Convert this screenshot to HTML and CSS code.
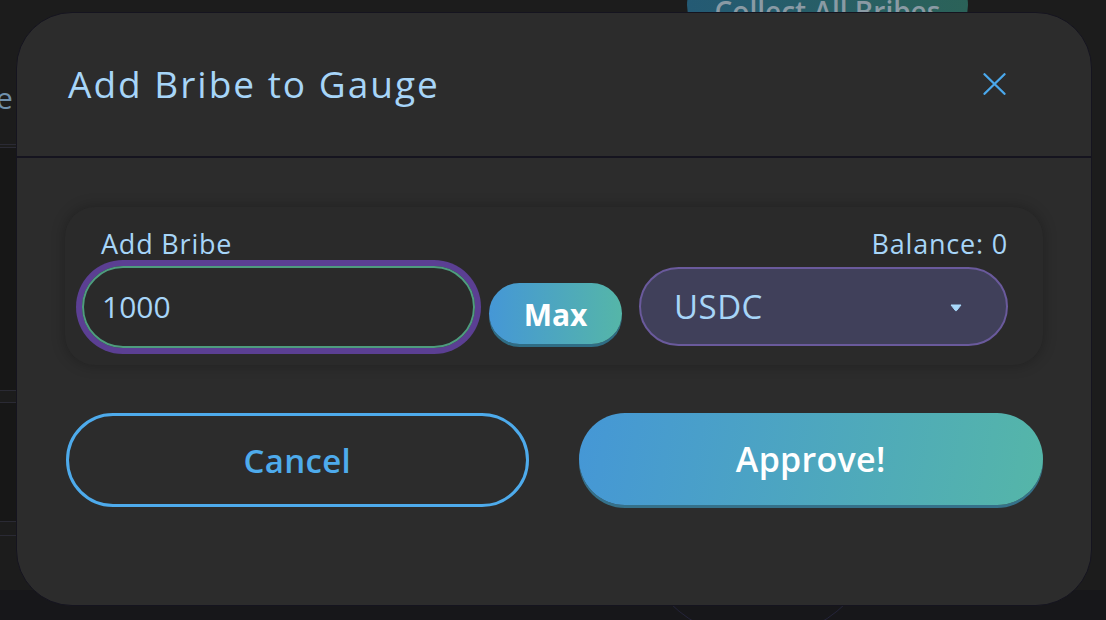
FILE: index.html
```html
<!DOCTYPE html>
<html lang="en">
<head>
<meta charset="utf-8">
<title>Add Bribe to Gauge</title>
<link rel="stylesheet" href="styles.css">
</head>
<body>
<div class="page">
  <div class="bg-pill">Collect All Bribes</div>
  <div class="bg-left">
    <div class="seg s1"><span class="bg-word">e</span></div>
    <div class="seg s2"></div>
    <div class="seg s3"></div>
    <div class="seg s4"></div>
    <div class="seg s5"></div>
    <div class="seg s6"></div>
  </div>
  <div class="bg-bottom">
    <div class="bg-circle"></div>
  </div>
</div>

<div class="overlay">
  <div class="modal">
    <div class="modal-header">
      <h2 class="modal-title">Add Bribe to Gauge</h2>
      <button class="close-btn" aria-label="Close">
        <svg width="23" height="22" viewBox="0 0 23 22"><path d="M1.5 1.2 L21.5 20.8 M21.5 1.2 L1.5 20.8" stroke="#4aa8ec" stroke-width="2.3" stroke-linecap="round" fill="none"/></svg>
      </button>
    </div>
    <div class="modal-body">
      <div class="card">
        <div class="label-row">
          <span class="label">Add Bribe</span>
          <span class="label">Balance: 0</span>
        </div>
        <div class="control-row">
          <div class="amount-input">1000</div>
          <button class="max-btn">Max</button>
          <div class="token-select">
            <span>USDC</span>
            <svg class="caret" width="12" height="8" viewBox="0 0 12 8"><path d="M1 1 H11 L6.6 6.6 Q6 7.3 5.4 6.6 Z" fill="#a8d8fa" stroke="#a8d8fa" stroke-width="1" stroke-linejoin="round"/></svg>
          </div>
        </div>
      </div>
      <div class="actions">
        <button class="btn-cancel">Cancel</button>
        <button class="btn-approve">Approve!</button>
      </div>
    </div>
  </div>
</div>
</body>
</html>
```

FILE: styles.css
```css
* { box-sizing: border-box; }
html, body { margin: 0; padding: 0; }
body {
  width: 1106px;
  height: 620px;
  overflow: hidden;
  background: #1c1c1c;
  font-family: "Open Sans", "Liberation Sans", sans-serif;
  position: relative;
}

/* background page (dimmed behind overlay) */
.page { position: absolute; inset: 0; }
.bg-pill {
  position: absolute;
  left: 687px; top: -30px;
  width: 281px; height: 70px;
  border-radius: 35px;
  background: linear-gradient(90deg, #245a74, #2b6258);
  color: #8a9aa4;
  font-size: 28px;
  font-weight: 600;
  display: flex; align-items: flex-end; justify-content: center;
  padding-bottom: 10px;
}
.bg-left { position: absolute; left: 0; top: 0; width: 17px; height: 620px; display: flex; flex-direction: column; }
.seg { border-bottom: 1px solid #2a2a34; background: #171717; flex: none; }
.s1 { height: 145px; background: #1c1c1c; position: relative; }
.s2 { height: 3px; background: #1c1c1c; }
.s3 { height: 243px; }
.s4 { height: 12px; background: #1c1c1c; }
.s5 { height: 119px; }
.s6 { height: 14px; background: #1c1c1c; }
.bg-word { position: absolute; left: -4px; top: 80px; font-size: 30px; line-height: 36px; color: #6f90ad; }
.bg-bottom { position: absolute; left: 0; right: 0; bottom: 0; height: 30px; background: #17171a; }
.bg-circle { position: absolute; left: 633px; top: -200px; width: 250px; height: 250px; border-radius: 50%; border: 1px solid #24243a; }

/* overlay */
.overlay {
  position: absolute; inset: 0;
  padding: 12px 0 0 16px;
}
.modal {
  width: 1076px;
  height: 594px;
  background: #2c2c2c;
  border: 1px solid #15141f;
  border-radius: 56px;
  overflow: hidden;
  display: flex;
  flex-direction: column;
}
.modal-header {
  height: 145px;
  flex: none;
  border-bottom: 2px solid #15141f;
  display: flex;
  align-items: center;
  justify-content: space-between;
  padding: 0 85px 2px 51px;
}
.modal-title {
  margin: 0;
  font-weight: 400;
  font-size: 37px;
  color: #a7d5f8;
  letter-spacing: 2px;
}
.close-btn {
  background: none; border: 0; padding: 0; margin: 0;
  width: 23px; height: 22px;
  display: flex;
}

.modal-body { padding: 49px 48px 0 48px; }
.card {
  height: 158px;
  background: #2a2a2a;
  border-radius: 30px;
  box-shadow: 0 0 14px rgba(0,0,0,0.28);
  padding: 22px 35px 0 17px;
}
.label-row {
  display: flex;
  justify-content: space-between;
  padding-left: 19px;
  line-height: 30px;
}
.label { font-size: 27px; color: #a7d5f8; letter-spacing: 0.8px; }
.control-row {
  margin-top: 7px;
  display: flex;
  align-items: flex-end;
}
.amount-input {
  width: 393px;
  height: 82px;
  border: 2px solid #4e9c7e;
  border-radius: 41px;
  box-shadow: 0 0 0 6px #5b3f93;
  color: #a7d5f8;
  font-size: 30px;
  display: flex; align-items: center;
  padding-left: 18px;
  padding-bottom: 2px;
}
.max-btn {
  margin-left: 14px;
  margin-bottom: 4px;
  width: 133px;
  height: 61px;
  border: 0;
  border-radius: 31px;
  background: linear-gradient(90deg, #4597d6, #55b6a8);
  box-shadow: 0 3px 0 #2f6d85;
  color: #fff;
  font-family: inherit;
  font-size: 30px;
  font-weight: 700;
  padding: 2px 0 0;
}
.token-select {
  margin-left: 17px;
  margin-bottom: 2px;
  flex: 1;
  height: 79px;
  background: #40405a;
  border: 2px solid #6a5a9c;
  border-radius: 40px;
  display: flex; align-items: center; justify-content: space-between;
  padding: 0 44px 0 33px;
  color: #a7d5f8;
  font-size: 33px;
  letter-spacing: 0.5px;
}
.caret { margin-top: 2px; }

.actions {
  margin-top: 48px;
  display: flex;
  gap: 50px;
  align-items: center;
}
.btn-cancel {
  width: 463px;
  height: 94px;
  border: 3px solid #4eabec;
  border-radius: 47px;
  background: transparent;
  color: #4eabec;
  font-family: inherit;
  font-size: 33px;
  font-weight: 600;
  letter-spacing: 0.3px;
  margin-left: 1px;
}
.btn-approve {
  width: 465px;
  height: 92px;
  border: 0;
  border-radius: 46px;
  background: linear-gradient(100deg, #4597d6, #55b6a8);
  box-shadow: 0 3px 0 #35718a;
  color: #fff;
  font-family: inherit;
  font-size: 34px;
  font-weight: 600;
  letter-spacing: 0.3px;
  margin-top: -2px;
}
```
